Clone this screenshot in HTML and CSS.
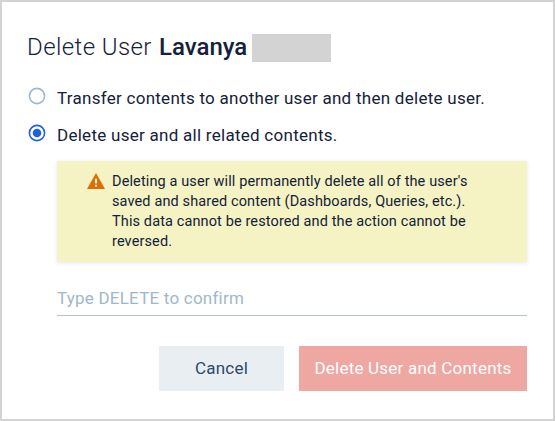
FILE: index.html
```html
<!DOCTYPE html>
<html lang="en">
<head>
<meta charset="utf-8">
<title>Delete User</title>
<link rel="stylesheet" href="styles.css">
</head>
<body>
<main class="dialog">
  <h1 class="title"><span class="t1">Delete User</span><strong class="t2">Lavanya</strong><span class="redacted"></span></h1>
  <div class="option"><svg class="radio" viewBox="0 0 18 18"><circle class="ring" cx="9" cy="9" r="7.6"/></svg><span class="o1">Transfer contents to another user and then delete user.</span></div>
  <div class="option second"><svg class="radio checked" viewBox="0 0 18 18"><circle class="ring" cx="9" cy="9" r="7.6"/><circle class="dot" cx="9" cy="9" r="4.3"/></svg><span class="o2">Delete user and all related contents.</span></div>
  <section class="warning">
    <svg class="alert" viewBox="0 0 18 16"><path fill="#d97006" d="M9 0 18 16H0Z"/><path fill="#fff9e5" d="M8.1 5.8h1.8v4.6H8.1zM8.1 11.8h1.8v1.8H8.1z"/></svg>
    <p class="message"><span class="m1">Deleting a user will permanently delete all of the user's</span><span class="m2">saved and shared content (Dashboards, Queries, etc.).</span><span class="m3">This data cannot be restored and the action cannot be</span><span class="m4">reversed.</span></p>
  </section>
  <div class="field"><span class="f1">Type DELETE to confirm</span></div>
  <div class="actions"><button class="cancel"><span>Cancel</span></button><button class="delete"><span>Delete User and Contents</span></button></div>
</main>
</body>
</html>
```

FILE: styles.css
```css
* { box-sizing: border-box; }
body { margin: 0; font-family: Roboto, "Liberation Sans", sans-serif; color: #14213a; }
.dialog { width: 555px; height: 421px; border: 2px solid #d3d3d3; background: #fff; padding: 32px 26px 0 25px; }
.title { display: flex; align-items: center; height: 28px; margin: 0; font-size: 24px; font-weight: 400; white-space: nowrap; }
.title span, .title strong { flex: none; line-height: 28px; }
.t1 { width: 126px; font-weight: 300; letter-spacing: .4px; position: relative; top: -1px; }
.t2 { width: 88px; margin-left: 6px; font-weight: 500; position: relative; top: -1px; }
.redacted { width: 79px; height: 28px; margin-left: 5px; background: #d3d3d3; }
.option { display: flex; align-items: center; height: 36px; margin-top: 18px; font-size: 17px; letter-spacing: .27px; white-space: nowrap; }
.second { margin-top: 1px; }
.radio { width: 18px; height: 18px; margin: 0 11px 4px 1px; flex: none; }
.ring { fill: none; stroke: #a0b7ce; stroke-width: 1.6; }
.checked .ring { stroke: #1f60dc; }
.dot { fill: #1f60dc; }
.warning { display: flex; height: 101px; margin: 8px 0 0 30px; padding: 11px 0 0 30px; background: #f5f2c3; box-shadow: 0 1px 4px #0f29501f; }
.alert { width: 18px; height: 16px; margin: 1px 7px 0 0; flex: none; }
.message { margin: 0; font-size: 14.5px; line-height: 20px; letter-spacing: .12px; }
.message span { display: block; width: max-content; }
.field { height: 54px; margin-left: 30px; padding-top: 26px; border-bottom: 1px solid #b4c3cf; color: #a0b7cb; font-size: 17px; line-height: 20px; letter-spacing: .22px; }
.actions { display: flex; justify-content: flex-end; gap: 15px; margin-top: 30px; }
button { height: 45px; padding: 0 0 2px; border: 0; font: 17px Roboto, sans-serif; letter-spacing: .22px; white-space: nowrap; }
.cancel { width: 125px; background: #e9eef2; color: #2d4966; }
.delete { width: 228px; background: #eea7a1; color: #fff; }
```
